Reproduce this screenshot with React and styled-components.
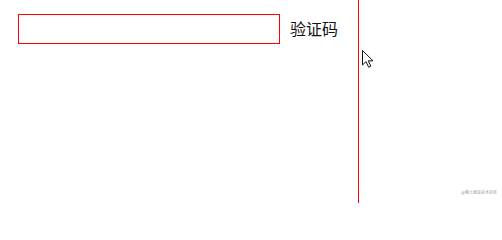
import React from "react";
import styled, { createGlobalStyle } from "styled-components";

const Global = createGlobalStyle`
  html, body { margin: 0; padding: 0; background: #fff; }
  body { font-family: "Noto Sans CJK SC", "Noto Sans", sans-serif; }
`;

const Page = styled.div`
  position: relative;
  width: 502px;
  height: 203px;
  display: flex;
  overflow: hidden;
  background: #fff;
`;

const Left = styled.div`
  width: 358px;
  flex: none;
  box-sizing: border-box;
  padding: 14px 0 0 18px;
`;

const Divider = styled.div`
  width: 1px;
  flex: none;
  align-self: stretch;
  background: #ff0000;
`;

const Row = styled.div`
  display: flex;
  align-items: center;
  gap: 11px;
`;

const Input = styled.input`
  box-sizing: border-box;
  width: 262px;
  height: 30px;
  margin: 0;
  border: 1px solid #ff0000;
  outline: none;
  padding: 0 6px;
  font-size: 14px;
  background: #fff;
`;

const Label = styled.span`
  font-size: 16px;
  line-height: 20px;
  color: #111;
  margin-top: -2px;
  margin-left: -1px;
`;

const Right = styled.div`
  flex: 1;
  position: relative;
`;

const Cursor = styled.svg`
  position: absolute;
  left: 3px;
  top: 50px;
`;

const Watermark = styled.span`
  position: absolute;
  right: 5px;
  bottom: 8px;
  font-size: 4px;
  line-height: 5px;
  color: #9a9a9a;
  white-space: nowrap;
`;

export default function App() {
  return (
    <>
      <Global />
      <Page>
        <Left>
          <Row>
            <Input type="text" />
            <Label>验证码</Label>
          </Row>
        </Left>
        <Divider />
        <Right>
          <Cursor width="13" height="18" viewBox="0 0 13 18">
            <path
              d="M0.5 0.5 L0.5 15 L4 11.6 L6.6 17.2 L8.8 16.2 L6.3 10.8 L11 10.8 Z"
              fill="#fff"
              stroke="#111"
              strokeWidth="1"
              strokeLinejoin="miter"
            />
          </Cursor>
          <Watermark>@稀土掘金技术社区</Watermark>
        </Right>
      </Page>
    </>
  );
}
